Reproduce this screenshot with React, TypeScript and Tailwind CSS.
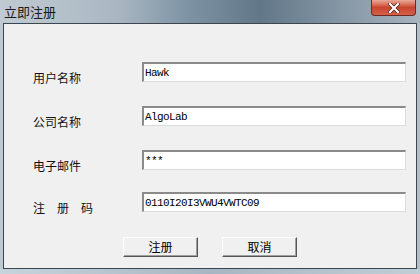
import React from 'react';

const cjk = { fontFamily: '"Noto Sans CJK SC", "Noto Sans", sans-serif' };
const mono = { fontFamily: '"Liberation Mono", "DejaVu Sans Mono", monospace' };

interface FieldRowProps {
  label: React.ReactNode;
  value: string;
  top: string;
}

const FieldRow: React.FC<FieldRowProps> = ({ label, value, top }) => (
  <div className={`flex items-end ${top}`}>
    <div className="w-[138px] pl-[29px] text-[12px] leading-[12px] text-[#111] mb-[-2px]" style={cjk}>
      {label}
    </div>
    <div className="w-[264px] h-[20px] bg-white border-t-2 border-l-2 border-t-[#8a8a8a] border-l-[#8a8a8a] border-b border-r border-b-[#dcdcdc] border-r-[#dcdcdc] flex items-center pl-[1px]">
      <span className="text-[11px] leading-[12px] tracking-[-0.6px] text-black" style={mono}>
        {value}
      </span>
    </div>
  </div>
);

const Button: React.FC<{ text: string }> = ({ text }) => (
  <button
    className="w-[75px] h-[20px] bg-[#f0f0f0] border border-t-white border-l-white border-b-[#555] border-r-[#555] shadow-[inset_-1px_-1px_0_#a0a0a0] text-[12px] leading-[12px] text-black flex items-center justify-center"
    style={cjk}
  >
    {text}
  </button>
);

export default function App() {
  return (
    <div className="w-[420px] h-[274px] flex flex-col bg-[linear-gradient(90deg,#bfc9d1_0%,#a7b4bf_35%,#7a8e9e_60%,#95a4b1_80%,#b3bec7_100%)] overflow-hidden">
      {/* title bar */}
      <div className="h-[23px] flex items-start justify-between pl-[4px] pr-[4px] bg-[linear-gradient(90deg,#c0cad2_0%,#aab7c2_28%,#7d92a3_45%,#627788_62%,#7f91a0_78%,#a8b4be_100%)]">
        <span className="mt-[4px] text-[13px] leading-[15px] text-[#1b1b1b]" style={cjk}>
          立即注册
        </span>
        <div className="w-[45px] h-[16px] rounded-b-[4px] border border-t-0 border-[#6b2a22] bg-gradient-to-b from-[#e9a99a] via-[#c9452f] to-[#d5604a] flex items-center justify-center">
          <svg width="12" height="10" viewBox="0 0 12 10">
            <path d="M2 1 L10 9 M10 1 L2 9" stroke="#4a1a14" strokeWidth="3.6" strokeLinecap="square" />
            <path d="M2 1 L10 9 M10 1 L2 9" stroke="#ffffff" strokeWidth="2.2" strokeLinecap="square" />
          </svg>
        </div>
      </div>

      {/* client area */}
      <div className="mx-[3px] h-[246px] bg-[#f0f0f0] border border-[#3c4650] flex flex-col">
        <FieldRow label="用户名称" value="Hawk" top="mt-[38px]" />
        <FieldRow label="公司名称" value="AlgoLab" top="mt-[24px]" />
        <FieldRow label="电子邮件" value="***" top="mt-[24px]" />
        <FieldRow
          label={
            <span className="flex gap-[12px]">
              <span>注</span>
              <span>册</span>
              <span>码</span>
            </span>
          }
          value="0110I20I3VWU4VWTC09"
          top="mt-[22px]"
        />
        <div className="flex gap-[24px] pl-[119px] mt-[25px]">
          <Button text="注册" />
          <Button text="取消" />
        </div>
      </div>

      <div className="flex-1 bg-[linear-gradient(90deg,#c8d4dc_0%,#a6b6c2_50%,#c2ced6_100%)]" />
    </div>
  );
}
